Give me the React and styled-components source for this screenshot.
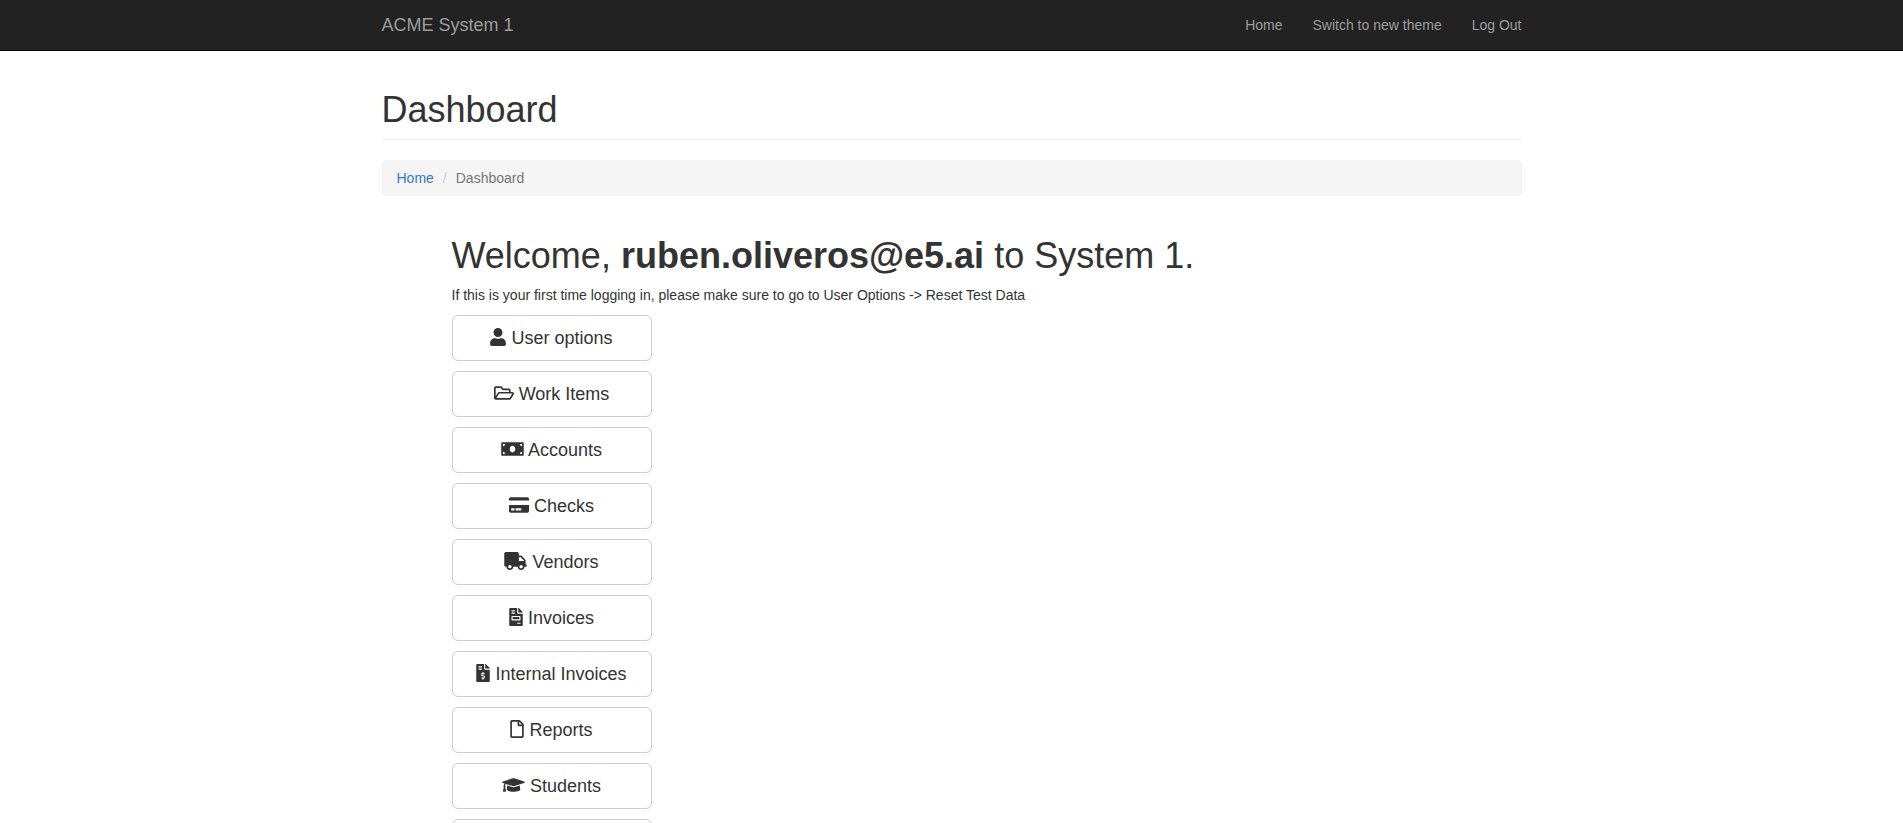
import React from "react";
import styled, { createGlobalStyle } from "styled-components";
import {
  FaUser,
  FaRegFolderOpen,
  FaMoneyBill,
  FaCreditCard,
  FaTruck,
  FaFileInvoice,
  FaFileInvoiceDollar,
  FaRegFile,
  FaGraduationCap,
  FaBook,
} from "react-icons/fa";

const GlobalStyle = createGlobalStyle`
  *, *::before, *::after { box-sizing: border-box; }
  body {
    margin: 0;
    background: #fff;
    color: #333;
    font-family: "Helvetica Neue", "Liberation Sans", Arial, sans-serif;
    font-size: 14px;
    line-height: 20px;
  }
`;

const Container = styled.div`
  width: 100%;
  max-width: 1170px;
  margin: 0 auto;
  padding: 0 15px;
`;

const Navbar = styled.nav`
  background: #222;
  border-bottom: 1px solid #080808;
`;

const NavRow = styled(Container)`
  display: flex;
  flex-wrap: wrap;
  align-items: center;
  justify-content: space-between;
`;

const Brand = styled.a`
  padding: 15px 0;
  color: #9d9d9d;
  font-size: 18px;
  text-decoration: none;
  &:hover { color: #fff; }
`;

const NavLinks = styled.ul`
  display: flex;
  gap: 30px;
  margin: 0;
  padding: 0;
  list-style: none;
`;

const NavLink = styled.a`
  display: block;
  padding: 15px 0;
  color: #9d9d9d;
  text-decoration: none;
  &:hover { color: #fff; }
`;

const Title = styled.h1`
  margin: 0;
  font-size: 36px;
  font-weight: 500;
  line-height: 40px;
`;

const PageHeader = styled.header`
  margin: 39px 0 20px;
  padding-bottom: 9px;
  border-bottom: 1px solid #eee;
`;

const Breadcrumb = styled.ol`
  display: flex;
  margin: 0;
  padding: 8px 15px;
  border-radius: 4px;
  background: #f5f5f5;
  list-style: none;
`;

const Crumb = styled.li`
  color: #777;
  & + &::before {
    content: "/";
    padding: 0 9px;
    color: #ccc;
  }
`;

const CrumbLink = styled.a`
  color: #337ab7;
  text-decoration: none;
  &:hover { text-decoration: underline; }
`;

const Content = styled.main`
  padding: 40px 70px 20px;
`;

const Intro = styled.p`
  margin: 9px 0 10px;
`;

const Menu = styled.div`
  display: flex;
  flex-direction: column;
  align-items: flex-start;
  gap: 10px;
`;

const MenuButton = styled.button`
  width: 200px;
  padding: 10px 16px;
  border: 1px solid #ccc;
  border-radius: 6px;
  background: #fff;
  color: #333;
  font-family: inherit;
  font-size: 18px;
  line-height: 24px;
  white-space: nowrap;
  cursor: pointer;
  &:hover { background: #e6e6e6; border-color: #adadad; }
`;

// Font Awesome glyphs share a height but vary in width.
const MenuIcon = styled.span`
  svg {
    width: ${({ $width }) => $width}px;
    height: 18px;
    vertical-align: -2px;
  }
`;

const navItems = ["Home", "Switch to new theme", "Log Out"];

const menuItems = [
  { label: "User options", Icon: FaUser, iconWidth: 16 },
  { label: "Work Items", Icon: FaRegFolderOpen, iconWidth: 20 },
  { label: "Accounts", Icon: FaMoneyBill, iconWidth: 23 },
  { label: "Checks", Icon: FaCreditCard, iconWidth: 20 },
  { label: "Vendors", Icon: FaTruck, iconWidth: 23 },
  { label: "Invoices", Icon: FaFileInvoice, iconWidth: 14 },
  { label: "Internal Invoices", Icon: FaFileInvoiceDollar, iconWidth: 14 },
  { label: "Reports", Icon: FaRegFile, iconWidth: 14 },
  { label: "Students", Icon: FaGraduationCap, iconWidth: 23 },
  { label: "Courses", Icon: FaBook, iconWidth: 16 },
];

export default function App() {
  return (
    <>
      <GlobalStyle />
      <Navbar>
        <NavRow>
          <Brand href="#">ACME System 1</Brand>
          <NavLinks>
            {navItems.map((item) => (
              <li key={item}>
                <NavLink href="#">{item}</NavLink>
              </li>
            ))}
          </NavLinks>
        </NavRow>
      </Navbar>
      <Container>
        <PageHeader>
          <Title>Dashboard</Title>
        </PageHeader>
        <Breadcrumb>
          <Crumb>
            <CrumbLink href="#">Home</CrumbLink>
          </Crumb>
          <Crumb>Dashboard</Crumb>
        </Breadcrumb>
        <Content>
          <Title as="h2">
            Welcome, <strong>ruben.oliveros@e5.ai</strong> to System 1.
          </Title>
          <Intro>
            If this is your first time logging in, please make sure to go to
            User Options -&gt; Reset Test Data
          </Intro>
          <Menu>
            {menuItems.map(({ label, Icon, iconWidth }) => (
              <MenuButton key={label} type="button">
                <MenuIcon $width={iconWidth}>
                  <Icon aria-hidden="true" />
                </MenuIcon>{" "}
                {label}
              </MenuButton>
            ))}
          </Menu>
        </Content>
      </Container>
    </>
  );
}
